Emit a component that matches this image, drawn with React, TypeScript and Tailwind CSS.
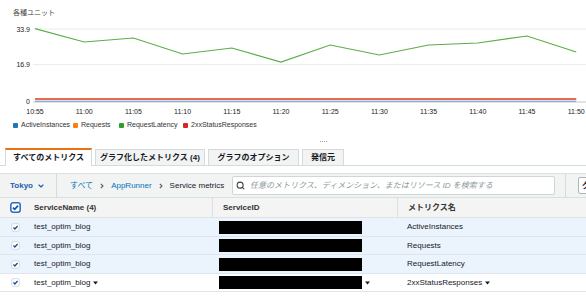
import React from 'react';
import { ChevronDown, Search } from 'lucide-react';

const times = ['10:55', '11:00', '11:05', '11:10', '11:15', '11:20', '11:25', '11:30', '11:35', '11:40', '11:45', '11:50'];
const latency = [6.7, 20, 16, 32, 26, 40, 23, 33, 23, 21, 14, 30];
const x0 = 35;
const step = 49.2;

const legend = [
  { label: 'ActiveInstances', color: '#1f77b4', w: 'w-[60px]' },
  { label: 'Requests', color: '#ff7f0e', w: 'w-[46px]' },
  { label: 'RequestLatency', color: '#2ca02c', w: 'w-[64px]' },
  { label: '2xxStatusResponses', color: '#d62728', w: 'w-[90px]' },
];

const rows = [
  { metric: 'ActiveInstances', selected: true },
  { metric: 'Requests', selected: true },
  { metric: 'RequestLatency', selected: true },
  { metric: '2xxStatusResponses', selected: false, menu: true },
];

function Checkbox({ header }: { header?: boolean }) {
  const s = header ? 11 : 9;
  return (
    <svg width={s} height={s} viewBox="0 0 10 10" className="shrink-0">
      <rect
        x="0.75"
        y="0.75"
        width="8.5"
        height="8.5"
        rx="2"
        fill="white"
        stroke={header ? '#1f6fc5' : '#c3ccd2'}
        strokeWidth={header ? 1.4 : 0.8}
      />
      <path d="M2.7 5.1 L4.3 6.7 L7.3 3.3" fill="none" stroke="#1a4f9c" strokeWidth="1.5" />
    </svg>
  );
}

function Caret() {
  return (
    <svg width="5" height="4" viewBox="0 0 5 4" className="ml-[3px] shrink-0">
      <path d="M0 0.5 H5 L2.5 3.5 Z" fill="#16191f" />
    </svg>
  );
}

function Sep() {
  return (
    <svg width="4" height="6" viewBox="0 0 4 6" className="mx-[7px] shrink-0">
      <path d="M0.8 0.8 L3 3 L0.8 5.2" fill="none" stroke="#545b64" strokeWidth="1.1" />
    </svg>
  );
}

function Chart() {
  const pts = latency.map((y, i) => `${x0 + i * step},${y}`).join(' ');
  const xEnd = x0 + 11 * step;
  return (
    <svg width="586" height="98" viewBox="0 0 586 98" className="block">
      <line x1="33" y1="7" x2="586" y2="7" stroke="#ececec" strokeWidth="1" />
      <line x1="33" y1="42.5" x2="586" y2="42.5" stroke="#ececec" strokeWidth="1" />
      <line x1="33" y1="80" x2="586" y2="80" stroke="#c8c8c8" strokeWidth="1" />
      <text x="30" y="9.5" textAnchor="end" fontSize="7" fill="#222">33.9</text>
      <text x="30" y="45" textAnchor="end" fontSize="7" fill="#222">16.9</text>
      <text x="30" y="81.5" textAnchor="end" fontSize="7" fill="#222">0</text>
      <polyline points={pts} fill="none" stroke="#5aae47" strokeWidth="1.2" />
      <line x1={x0} y1="79.2" x2={xEnd} y2="79.2" stroke="#5b9bd5" strokeWidth="1" />
      <line x1={x0} y1="77" x2={xEnd} y2="77" stroke="#ff7f0e" strokeWidth="1.4" />
      <line x1={x0} y1="77" x2={xEnd} y2="77" stroke="#e05a50" strokeWidth="1.4" />
      {times.map((t, i) => (
        <text key={t} x={x0 + i * step} y="91.5" textAnchor="middle" fontSize="7" fill="#222">
          {t}
        </text>
      ))}
    </svg>
  );
}

export default function App() {
  return (
    <div className="w-[586px] h-[296px] overflow-hidden bg-white text-[#16191f] font-['Liberation_Sans','Noto_Sans_CJK_JP',sans-serif]">
      {/* chart */}
      <div className="h-[22px] pl-[13px] pt-[8px] text-[7px] leading-[10px] text-[#444]">各種ユニット</div>
      <Chart />
      <div className="h-[11px] flex items-center pl-[13px] text-[7px] text-[#333]">
        {legend.map((l) => (
          <div key={l.label} className={`${l.w} flex items-center shrink-0`}>
            <span className="w-[5px] h-[5px] rounded-[1px] mr-[3px]" style={{ backgroundColor: l.color }} />
            <span className="whitespace-nowrap">{l.label}</span>
          </div>
        ))}
      </div>
      <div className="h-[17px] flex pl-[320px] pt-[10px] gap-[1px]">
        <span className="w-[1px] h-[1px] bg-[#9aa5a8]" />
        <span className="w-[1px] h-[1px] bg-[#9aa5a8]" />
        <span className="w-[1px] h-[1px] bg-[#9aa5a8]" />
        <span className="w-[1px] h-[1px] bg-[#9aa5a8]" />
      </div>

      {/* tabs */}
      <div className="h-[18px] flex items-end gap-[3px] pl-[5px] border-b border-[#d5dbdb] text-[8px] font-bold">
        <div className="w-[87px] h-[18px] -mb-px flex items-center justify-center bg-white border-x border-t-2 border-[#d5dbdb] border-t-[#ec7211]">
          すべてのメトリクス
        </div>
        <div className="w-[110px] h-[16px] flex items-center justify-center bg-[#f2f3f3] border border-b-0 border-[#d5dbdb]">
          グラフ化したメトリクス (4)
        </div>
        <div className="w-[91px] h-[16px] flex items-center justify-center bg-[#f2f3f3] border border-b-0 border-[#d5dbdb]">
          グラフのオプション
        </div>
        <div className="w-[42px] h-[16px] flex items-center justify-center bg-[#f2f3f3] border border-b-0 border-[#d5dbdb]">
          発信元
        </div>
      </div>
      <div className="h-[7px]" />

      {/* toolbar */}
      <div className="h-[25px] flex items-stretch overflow-hidden bg-[#f2f3f3] border-y border-[#dadfe0] text-[8px] whitespace-nowrap">
        <div className="w-[56px] shrink-0 flex items-center pl-[10px] font-bold text-[#1b5fae]">
          Tokyo
          <ChevronDown size={8} strokeWidth={3.5} className="ml-[4px]" />
        </div>
        <div className="w-px shrink-0 bg-[#d5dbdb]" />
        <div className="w-[175px] shrink-0 flex items-center pl-[13px]">
          <span className="text-[#0073bb]">すべて</span>
          <Sep />
          <span className="text-[#0073bb]">AppRunner</span>
          <Sep />
          <span>Service metrics</span>
        </div>
        <div className="w-[323px] shrink-0 my-[2px] flex items-center bg-white border border-[#cfd6d8] rounded-[2px] pl-[3px]">
          <Search size={9} strokeWidth={2.8} className="text-[#3b4146]" />
          <span className="ml-[5px] italic text-[#8c9899]">任意のメトリクス、ディメンション、またはリソース ID を検索する</span>
        </div>
        <div className="w-px shrink-0 ml-[10px] bg-[#d5dbdb]" />
        <div className="shrink-0 ml-[12px] my-[3px] px-[3px] flex items-center bg-white border border-[#aab7b8] rounded-[2px] font-bold">
          グラフの検索
        </div>
      </div>

      {/* table */}
      <div className="text-[8px]">
        <div className="h-[20px] flex bg-[#f4f4f4] border-b border-[#dfe3e6] font-bold text-[#333]">
          <div className="w-[212px] flex items-center pl-[10px]">
            <Checkbox header />
            <span className="ml-[13px]">ServiceName (4)</span>
          </div>
          <div className="w-[185px] flex items-center pl-[10px] border-l border-[#dadfe0]">ServiceID</div>
          <div className="flex-1 flex items-center pl-[10px] border-l border-[#dadfe0]">メトリクス名</div>
        </div>
        {rows.map((r, i) => (
          <div
            key={r.metric}
            className={`${i % 2 === 0 ? 'h-[19px]' : 'h-[18px]'} flex border-b border-[#dfe5ec] ${r.selected ? 'bg-[#ebf3fd]' : 'bg-white'}`}
          >
            <div className="w-[212px] flex items-center pl-[11px]">
              <Checkbox />
              <span className="ml-[14px]">test_optim_blog</span>
              {r.menu && <Caret />}
            </div>
            <div className="w-[185px] flex items-center pl-[7px]">
              <div className="w-[143px] h-[13px] bg-black" />
              {r.menu && <Caret />}
            </div>
            <div className="flex-1 flex items-center pl-[10px]">
              <span>{r.metric}</span>
              {r.menu && <Caret />}
            </div>
          </div>
        ))}
      </div>
    </div>
  );
}
